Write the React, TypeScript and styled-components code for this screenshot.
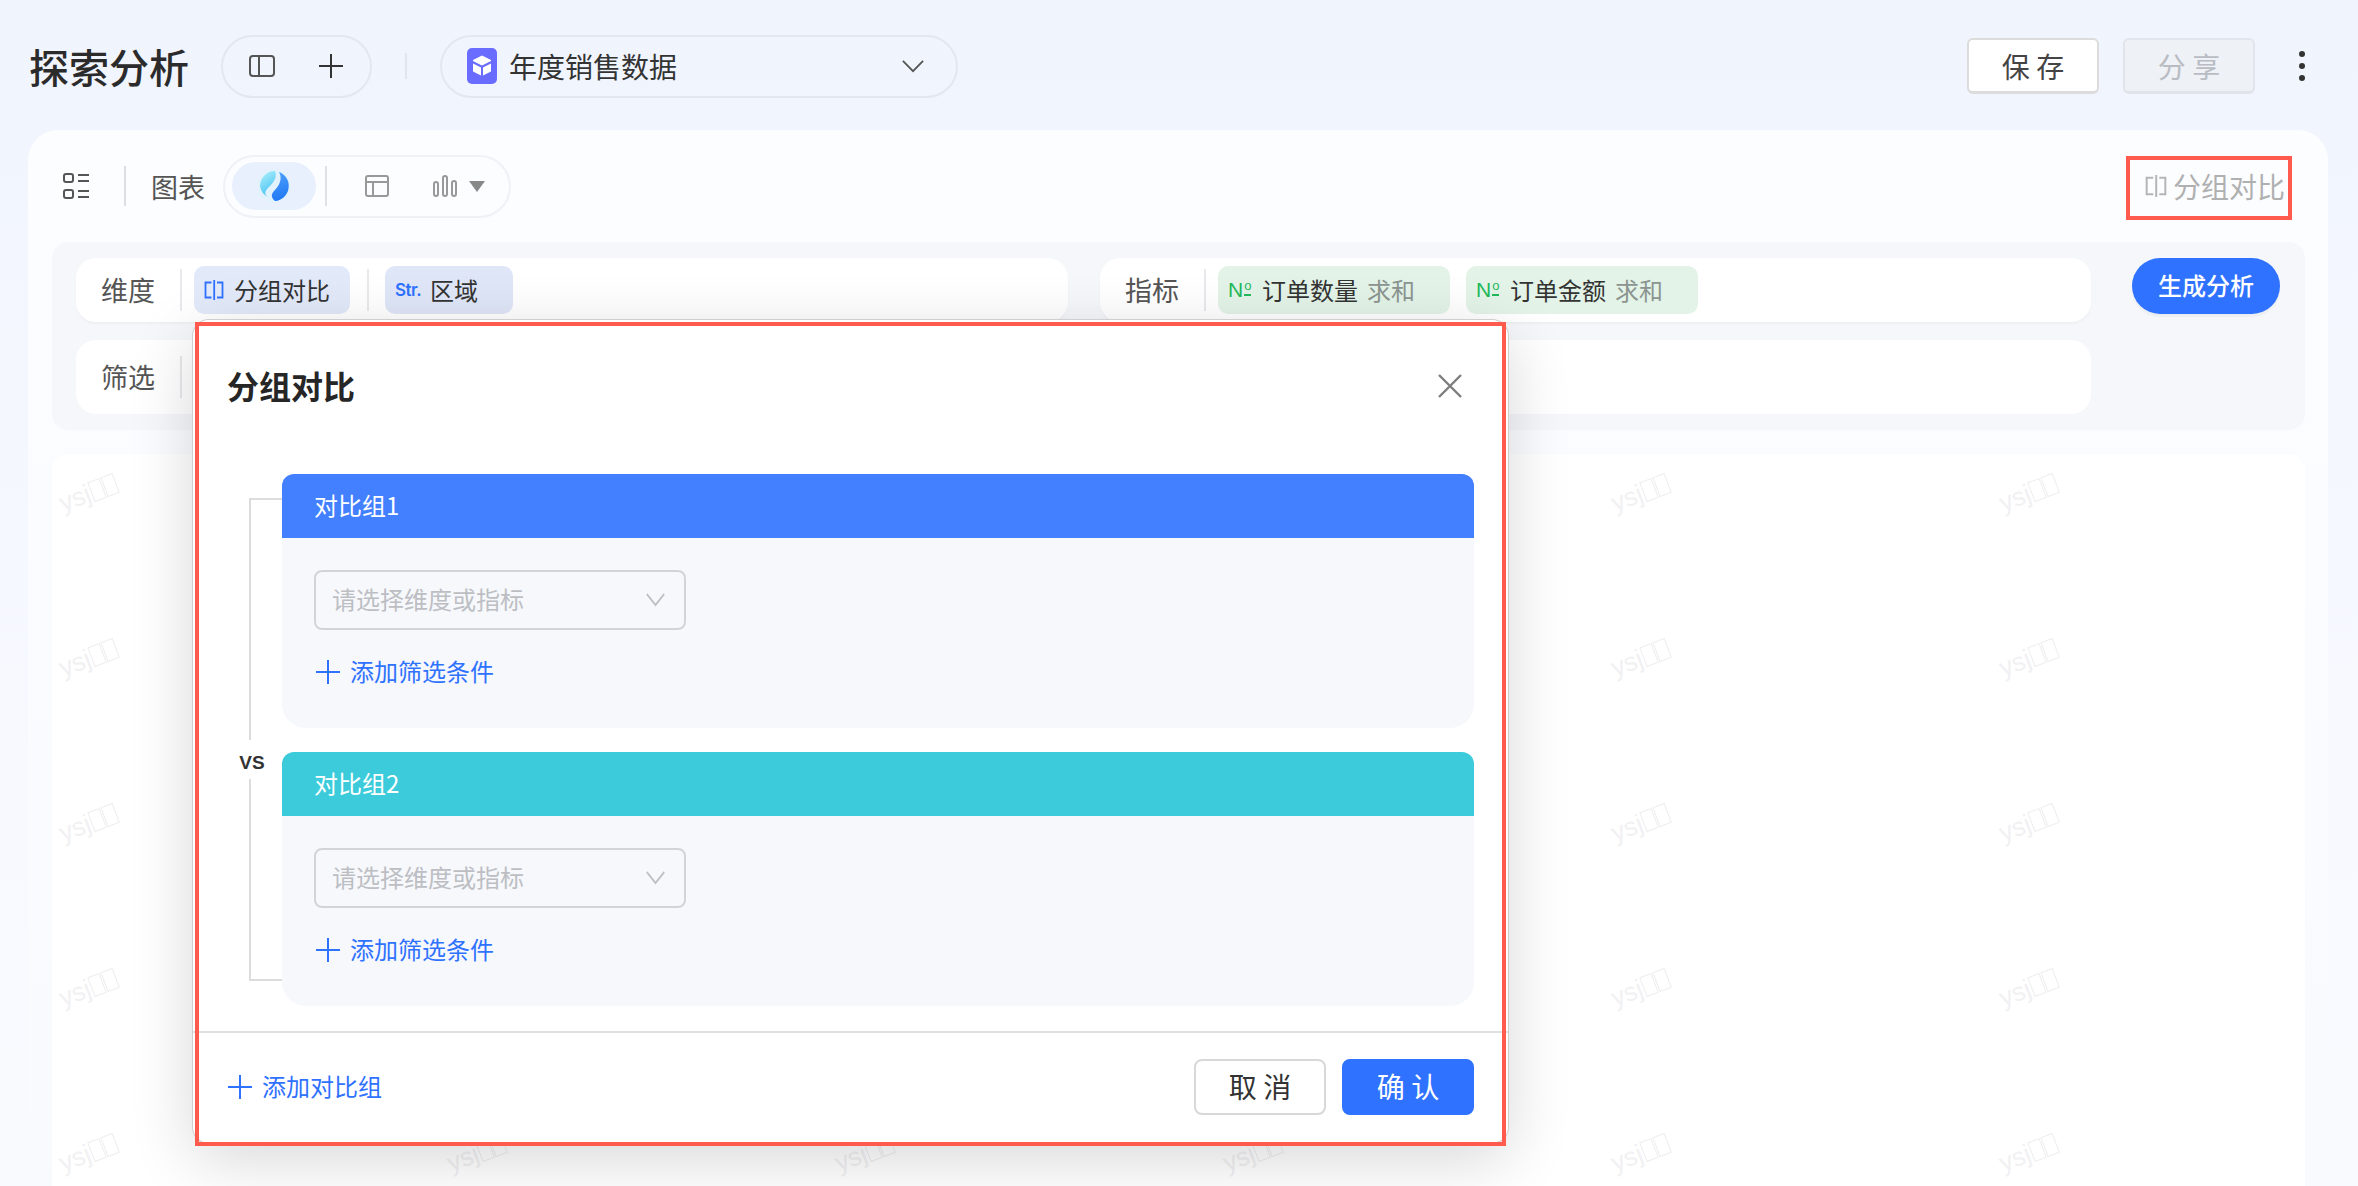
import styled, { createGlobalStyle } from 'styled-components';

const BLUE = '#2f72ff';
const FONT = '"Noto Sans CJK SC", "Noto Sans", sans-serif';

const GlobalStyle = createGlobalStyle`
  html, body {
    margin: 0;
    padding: 0;
    background: #f3f7fe;
  }
  * {
    box-sizing: border-box;
  }
`;

function SplitIcon({ color = '#555', size = 26 }: { color?: string; size?: number }) {
  return (
    <svg width={size} height={size} viewBox="0 0 26 26" fill="none" stroke={color} strokeWidth="2">
      <rect x="1" y="3" width="24" height="20" rx="3" />
      <path d="M10 3v20" />
    </svg>
  );
}

function PlusIcon({ color = '#333', size = 24, weight = 2 }: { color?: string; size?: number; weight?: number }) {
  return (
    <svg width={size} height={size} viewBox="0 0 24 24" fill="none" stroke={color} strokeWidth={weight}>
      <path d="M12 0v24M0 12h24" />
    </svg>
  );
}

function ChevronIcon({ color = '#555', width = 24, height = 14 }: { color?: string; width?: number; height?: number }) {
  return (
    <svg width={width} height={height} viewBox="0 0 24 14" preserveAspectRatio="none" fill="none" stroke={color} strokeWidth="2">
      <path d="M1 1l11 11L23 1" />
    </svg>
  );
}

function CompareIcon({ color, size = 20 }: { color: string; size?: number }) {
  return (
    <svg width={size} height={size} viewBox="0 0 20 20" fill="none" stroke={color} strokeWidth="1.8">
      <path d="M7.5 2.5H1.5v15h6M13 2.5h5.5v15H13M10.2 0v20" />
    </svg>
  );
}

function CubeIcon() {
  return (
    <svg width="30" height="36" viewBox="0 0 30 36">
      <rect width="30" height="36" rx="5" fill="#6a6cff" />
      <path d="M15 8l9 4.5-9 4.5-9-4.5z" fill="#fff" stroke="#fff" strokeLinejoin="round" />
      <path d="M6 15.5l8 4v8l-8-4zM24 15.5l-8 4v8l8-4z" fill="#fff" />
    </svg>
  );
}

function ListIcon() {
  return (
    <svg width="26" height="26" viewBox="0 0 26 26" fill="none" stroke="#555" strokeWidth="2">
      <rect x="1" y="1" width="9" height="8" rx="2" />
      <rect x="1" y="17" width="9" height="8" rx="2" />
      <path d="M15 2h11M15 8h11M15 18h11M15 24h11" />
    </svg>
  );
}

function LogoIcon() {
  return (
    <svg width="34" height="34" viewBox="0 0 34 34">
      <defs>
        <linearGradient id="logo-a" x1="0.2" y1="0" x2="0.6" y2="1">
          <stop offset="0" stopColor="#a9eefb" />
          <stop offset="1" stopColor="#45c0f2" />
        </linearGradient>
        <linearGradient id="logo-b" x1="0.3" y1="0" x2="0.5" y2="1">
          <stop offset="0" stopColor="#4f9ffa" />
          <stop offset="1" stopColor="#1f78f5" />
        </linearGradient>
      </defs>
      <circle cx="17" cy="17" r="16.5" fill="#dff2fc" opacity="0.8" />
      <path d="M18 2A15 15 0 0 0 3 17 15 15 0 0 0 11 28C7 25 8 22 11 19 15 15 21 9 18 2z" fill="url(#logo-a)" />
      <path d="M22 3A15 15 0 0 1 18 32C14 29 14 25 17 22 22 17 26 10 22 3z" fill="url(#logo-b)" />
    </svg>
  );
}

function TableIcon() {
  return (
    <svg width="24" height="22" viewBox="0 0 24 22" fill="none" stroke="#999" strokeWidth="2">
      <rect x="1" y="1" width="22" height="20" rx="2" />
      <path d="M1 7h22M8 7v14" />
    </svg>
  );
}

function BarsIcon() {
  return (
    <svg width="24" height="22" viewBox="0 0 24 22" fill="none" stroke="#999" strokeWidth="2">
      <rect x="1" y="7" width="4" height="14" rx="2" />
      <rect x="10" y="1" width="4" height="20" rx="2" />
      <rect x="19" y="6" width="4" height="15" rx="2" />
    </svg>
  );
}

function CaretIcon() {
  return (
    <svg width="16" height="11" viewBox="0 0 16 11">
      <path d="M0 0h16L8 11z" fill="#888" />
    </svg>
  );
}

function CloseIcon() {
  return (
    <svg width="26" height="26" viewBox="0 0 26 26" fill="none" stroke="#7d7d7d" strokeWidth="2.4">
      <path d="M2 2l22 22M24 2L2 24" />
    </svg>
  );
}

function DotsIcon() {
  return (
    <svg width="6" height="30" viewBox="0 0 6 30" fill="#333">
      <circle cx="3" cy="3" r="3" />
      <circle cx="3" cy="15" r="3" />
      <circle cx="3" cy="27" r="3" />
    </svg>
  );
}

const MEASURES = ['订单数量', '订单金额'];
const WATERMARKS = Array.from({ length: 30 }, (_, i) => i);

function CompareGroup({ name, color }: { name: string; color: string }) {
  return (
    <Group>
      <GroupHeader $color={color}>{name}</GroupHeader>
      <GroupBody>
        <Select>
          <Placeholder>请选择维度或指标</Placeholder>
          <ChevronIcon color="#bdbfc4" width={19} height={14} />
        </Select>
        <AddLink $inset>
          <PlusIcon color={BLUE} />
          <AddText>添加筛选条件</AddText>
        </AddLink>
      </GroupBody>
    </Group>
  );
}

export default function App() {
  return (
    <Page>
      <GlobalStyle />
      <Header>
        <Title>探索分析</Title>
        <IconPill>
          <SplitIcon />
          <PlusIcon />
        </IconPill>
        <HeaderSep />
        <DatasetSelect>
          <CubeIcon />
          <DatasetName>年度销售数据</DatasetName>
          <ChevronIcon width={22} height={13} />
        </DatasetSelect>
        <HeaderActions>
          <ActionButton>保 存</ActionButton>
          <ActionButton $disabled>分 享</ActionButton>
          <DotsWrap>
            <DotsIcon />
          </DotsWrap>
        </HeaderActions>
      </Header>

      <Card>
        <Toolbar>
          <ListIcon />
          <ToolbarSep />
          <ToolbarLabel>图表</ToolbarLabel>
          <ChartPill>
            <ActiveTab>
              <LogoIcon />
            </ActiveTab>
            <PillSep />
            <TableTab>
              <TableIcon />
            </TableTab>
            <BarsTab>
              <BarsIcon />
              <CaretIcon />
            </BarsTab>
          </ChartPill>
          <CompareToggle>
            <CompareIcon color="#b5b5b5" size={22} />
            分组对比
          </CompareToggle>
        </Toolbar>

        <FilterPanel>
          <FilterRow>
            <RowLabel>维度</RowLabel>
            <RowSep />
            <Chip $bg="#e2e9f9" $width={156}>
              <CompareIcon color={BLUE} />
              <ChipText>分组对比</ChipText>
            </Chip>
            <RowSep $wide />
            <Chip $bg="#dfe6f8" $width={128}>
              <StrTag>Str.</StrTag>
              <ChipText>区域</ChipText>
            </Chip>
          </FilterRow>
          <FilterRow>
            <RowLabel>指标</RowLabel>
            <RowSep />
            {MEASURES.map((name) => (
              <Chip key={name} $bg="#e3f3e7" $width={232}>
                <NumTag>
                  N<NumMark>o</NumMark>
                </NumTag>
                <ChipText>{name}</ChipText>
                <ChipSuffix>求和</ChipSuffix>
              </Chip>
            ))}
          </FilterRow>
          <GenerateButton>生成分析</GenerateButton>
          <FilterRow $tall>
            <RowLabel>筛选</RowLabel>
            <RowSep />
          </FilterRow>
          <FilterRow $tall />
        </FilterPanel>

        <ChartPanel>
          {WATERMARKS.map((i) => (
            <Watermark key={i}>
              ysj
              <WatermarkBox />
              <WatermarkBox />
            </Watermark>
          ))}
        </ChartPanel>
      </Card>

      <Modal>
        <ModalHead>
          <ModalTitle>分组对比</ModalTitle>
          <CloseIcon />
        </ModalHead>
        <ModalBody>
          <Bracket>
            <BracketArm $side="top" $height={242} />
            <VsLabel>VS</VsLabel>
            <BracketArm $side="bottom" $height={202} />
          </Bracket>
          <Groups>
            <CompareGroup name="对比组1" color="#4280ff" />
            <CompareGroup name="对比组2" color="#3ccbdb" />
          </Groups>
        </ModalBody>
        <ModalFoot>
          <AddLink>
            <PlusIcon color={BLUE} />
            <AddText>添加对比组</AddText>
          </AddLink>
          <FootButtons>
            <FootButton>取 消</FootButton>
            <FootButton $primary>确 认</FootButton>
          </FootButtons>
        </ModalFoot>
        <ModalFrame />
      </Modal>
      <ToggleFrame />
    </Page>
  );
}

const Page = styled.div`
  position: relative;
  width: 2358px;
  height: 1186px;
  overflow: hidden;
  padding: 0 30px 0 28px;
  font-family: ${FONT};
  color: #333;
  background: linear-gradient(180deg, #f0f4fd 0%, #f5f8fe 45%, #f8fafe 100%);
`;

const Header = styled.header`
  display: flex;
  align-items: center;
  height: 130px;
  padding: 2px 0 0 1px;
`;

const Title = styled.h1`
  margin: 0 32px 0 0;
  font-size: 40px;
  line-height: 1;
  font-weight: 500;
  color: #2b2b2b;
  white-space: nowrap;
`;

const IconPill = styled.div`
  display: flex;
  align-items: center;
  justify-content: space-between;
  width: 151px;
  height: 63px;
  padding: 0 27px 0 26px;
  border: 2px solid #e3e7ee;
  border-radius: 32px;
`;

const HeaderSep = styled.div`
  width: 2px;
  height: 26px;
  margin: 0 33px;
  background: #e2e6ec;
`;

const DatasetSelect = styled.div`
  display: flex;
  align-items: center;
  width: 518px;
  height: 63px;
  padding: 0 32px 0 25px;
  border: 2px solid #e3e7ee;
  border-radius: 32px;
`;

const DatasetName = styled.span`
  flex: 1;
  margin-left: 12px;
  font-size: 28px;
  color: #333;
`;

const HeaderActions = styled.div`
  display: flex;
  align-items: center;
  margin-left: auto;
  gap: 24px;
`;

const ActionButton = styled.div<{ $disabled?: boolean }>`
  display: flex;
  align-items: center;
  justify-content: center;
  width: 132px;
  height: 56px;
  font-size: 28px;
  border-radius: 6px;
  border: 2px solid ${(p) => (p.$disabled ? '#e1e4ea' : '#dcdcdc')};
  border-bottom-width: 3px;
  background: ${(p) => (p.$disabled ? '#eef1f6' : '#fff')};
  color: ${(p) => (p.$disabled ? '#b9bcc2' : '#444')};
`;

const DotsWrap = styled.div`
  display: flex;
  margin: 0 23px 0 20px;
`;

const Card = styled.main`
  height: 1056px;
  padding: 0 23px 0 24px;
  border-radius: 30px 30px 0 0;
  background: linear-gradient(180deg, #fcfdff 0%, #f9fafe 100%);
`;

const Toolbar = styled.div`
  display: flex;
  align-items: center;
  height: 112px;
  padding: 0 11px 0 11px;
`;

const ToolbarSep = styled.div`
  width: 2px;
  height: 40px;
  margin: 0 25px 0 35px;
  background: #dcdee2;
`;

const ToolbarLabel = styled.span`
  font-size: 27px;
  color: #555;
  white-space: nowrap;
`;

const ChartPill = styled.div`
  display: flex;
  align-items: center;
  width: 288px;
  height: 63px;
  margin-left: 18px;
  padding: 0 7px;
  border: 2px solid #eff1f5;
  border-radius: 32px;
`;

const ActiveTab = styled.div`
  display: flex;
  align-items: center;
  justify-content: center;
  width: 84px;
  height: 48px;
  border-radius: 24px;
  background: #e8f0fd;
`;

const PillSep = styled.div`
  width: 2px;
  height: 40px;
  margin-left: 9px;
  background: #dfe1e5;
`;

const TableTab = styled.div`
  display: flex;
  margin-left: 38px;
`;

const BarsTab = styled.div`
  display: flex;
  align-items: center;
  gap: 12px;
  margin-left: 44px;
`;

const CompareToggle = styled.div`
  display: flex;
  align-items: center;
  gap: 6px;
  margin-left: auto;
  margin-right: 9px;
  font-size: 28px;
  color: #b0b0b0;
  white-space: nowrap;
`;

const FilterPanel = styled.section`
  display: grid;
  grid-template-columns: 992px 991px 1fr;
  grid-auto-rows: auto;
  column-gap: 32px;
  row-gap: 18px;
  height: 188px;
  padding: 16px 23px 16px 24px;
  border-radius: 16px;
  background: #f5f7fb;
`;

const FilterRow = styled.div<{ $tall?: boolean }>`
  display: flex;
  align-items: center;
  height: ${(p) => (p.$tall ? '74px' : '64px')};
  padding-left: 25px;
  border-radius: 20px;
  background: #fff;
  box-shadow: ${(p) => (p.$tall ? 'none' : '0 2px 2px rgba(0, 0, 0, 0.03)')};
`;

const RowLabel = styled.span`
  width: 54px;
  padding-bottom: 2px;
  font-size: 27px;
  color: #555;
  white-space: nowrap;
`;

const RowSep = styled.div<{ $wide?: boolean }>`
  flex: none;
  width: 2px;
  height: 42px;
  margin: ${(p) => (p.$wide ? '0 16px 0 1px' : '0 12px 0 25px')};
  background: #e8e9ec;
`;

const Chip = styled.div<{ $bg: string; $width: number }>`
  display: flex;
  align-items: center;
  flex: none;
  width: ${(p) => p.$width}px;
  height: 48px;
  margin-right: 16px;
  padding-left: 10px;
  border-radius: 10px;
  background: ${(p) => p.$bg};
`;

const ChipText = styled.span`
  margin-left: 10px;
  padding-bottom: 2px;
  font-size: 24px;
  color: #333;
  white-space: nowrap;
`;

const ChipSuffix = styled.span`
  margin-left: 9px;
  padding-bottom: 2px;
  font-size: 24px;
  color: #8b9490;
  white-space: nowrap;
`;

const StrTag = styled.span`
  width: 25px;
  font-family: Inter, "Liberation Sans", sans-serif;
  font-size: 17px;
  font-weight: 600;
  color: ${BLUE};
  letter-spacing: -0.5px;
  white-space: nowrap;
`;

const NumTag = styled.span`
  display: flex;
  align-items: flex-start;
  width: 24px;
  font-family: "Liberation Sans", sans-serif;
  font-size: 21px;
  line-height: 22px;
  color: #22b959;
`;

const NumMark = styled.span`
  height: 17px;
  margin-left: 1px;
  font-size: 13px;
  line-height: 13px;
  border-bottom: 2px solid #22b959;
`;

const GenerateButton = styled.div`
  display: flex;
  align-items: center;
  justify-content: center;
  width: 148px;
  height: 56px;
  margin-left: 9px;
  padding-bottom: 4px;
  border-radius: 28px;
  font-size: 24px;
  font-weight: 500;
  color: #fff;
  background: ${BLUE};
  box-shadow: 0 3px 2px rgba(0, 0, 0, 0.04);
  justify-self: start;
`;

const ChartPanel = styled.section`
  display: grid;
  grid-template-columns: repeat(6, 388px);
  grid-auto-rows: 165px;
  height: 732px;
  margin-top: 24px;
  padding: 24px 0 0 6px;
  overflow: hidden;
  border-radius: 16px 16px 0 0;
  background: #fff;
`;

const Watermark = styled.div`
  display: flex;
  align-items: center;
  align-self: start;
  justify-self: start;
  gap: 1px;
  font-family: "Liberation Sans", sans-serif;
  font-size: 26px;
  line-height: 30px;
  color: #f1f1f3;
  transform: rotate(-21deg);
`;

const WatermarkBox = styled.span`
  width: 13px;
  height: 21px;
  border: 1px solid #eeeef0;
`;

const Modal = styled.div`
  position: absolute;
  left: 193px;
  top: 320px;
  display: flex;
  flex-direction: column;
  width: 1315px;
  height: 823px;
  border-radius: 16px;
  background: #fff;
  box-shadow: 0 0 0 1px #cfcfcf, 0 16px 64px rgba(0, 0, 0, 0.16);
`;

const ModalFrame = styled.div`
  position: absolute;
  left: 2px;
  top: 2px;
  width: 1311px;
  height: 824px;
  border: 4px solid #ff5a4d;
  pointer-events: none;
`;

const ToggleFrame = styled.div`
  position: absolute;
  left: 2126px;
  top: 156px;
  width: 166px;
  height: 64px;
  border: 4px solid #ff5a4d;
  pointer-events: none;
`;

const ModalHead = styled.div`
  display: flex;
  align-items: center;
  justify-content: space-between;
  height: 132px;
  padding: 0 45px 0 34px;
`;

const ModalTitle = styled.h2`
  margin: 0;
  padding-bottom: 2px;
  font-size: 32px;
  line-height: 1;
  font-weight: 600;
  color: #262626;
`;

const ModalBody = styled.div`
  display: flex;
  height: 579px;
  padding: 22px 34px 0 56px;
`;

const Bracket = styled.div`
  display: flex;
  flex-direction: column;
  align-items: stretch;
  width: 33px;
  flex: none;
  padding-top: 24px;
`;

const BracketArm = styled.div<{ $side: 'top' | 'bottom'; $height: number }>`
  height: ${(p) => p.$height}px;
  border-left: 2px solid #dcdcdc;
  border-${(p) => p.$side}: 2px solid #dcdcdc;
`;

const VsLabel = styled.div`
  width: 30px;
  height: 39px;
  margin-left: -12px;
  padding-top: 11px;
  font-family: "Liberation Sans", sans-serif;
  font-size: 19px;
  line-height: 24px;
  font-weight: 700;
  text-align: center;
  color: #333;
`;

const Groups = styled.div`
  display: flex;
  flex: 1;
  flex-direction: column;
  gap: 24px;
`;

const Group = styled.div`
  display: flex;
  flex-direction: column;
  height: 254px;
`;

const GroupHeader = styled.div<{ $color: string }>`
  display: flex;
  align-items: center;
  height: 64px;
  padding: 0 0 3px 32px;
  border-radius: 12px 12px 0 0;
  font-size: 24px;
  color: #fff;
  background: ${(p) => p.$color};
`;

const GroupBody = styled.div`
  flex: 1;
  padding: 32px 32px 0;
  border-radius: 0 0 24px 24px;
  background: #f6f8fc;
`;

const Select = styled.div`
  display: flex;
  align-items: center;
  justify-content: space-between;
  width: 372px;
  height: 60px;
  padding: 0 19px 0 16px;
  border: 2px solid #d2d4d9;
  border-radius: 8px;
`;

const Placeholder = styled.span`
  padding-bottom: 3px;
  font-size: 24px;
  color: #bcbec3;
  white-space: nowrap;
`;

const AddLink = styled.div<{ $inset?: boolean }>`
  display: flex;
  align-items: center;
  gap: 10px;
  height: 24px;
  margin-top: ${(p) => (p.$inset ? 30 : 0)}px;
  padding-left: ${(p) => (p.$inset ? 2 : 0)}px;
  font-size: 24px;
  color: ${BLUE};
  white-space: nowrap;
`;

const AddText = styled.span`
  padding-bottom: 3px;
`;

const ModalFoot = styled.div`
  display: flex;
  align-items: center;
  justify-content: space-between;
  flex: 1;
  padding: 0 34px 2px 35px;
  border-top: 2px solid #e0e0e0;
`;

const FootButtons = styled.div`
  display: flex;
  gap: 16px;
`;

const FootButton = styled.div<{ $primary?: boolean }>`
  display: flex;
  align-items: center;
  justify-content: center;
  width: 132px;
  height: 56px;
  padding-bottom: 2px;
  border-radius: 8px;
  font-size: 28px;
  border: 2px solid ${(p) => (p.$primary ? BLUE : '#d8d8d8')};
  color: ${(p) => (p.$primary ? '#fff' : '#333')};
  background: ${(p) => (p.$primary ? BLUE : '#fff')};
`;
